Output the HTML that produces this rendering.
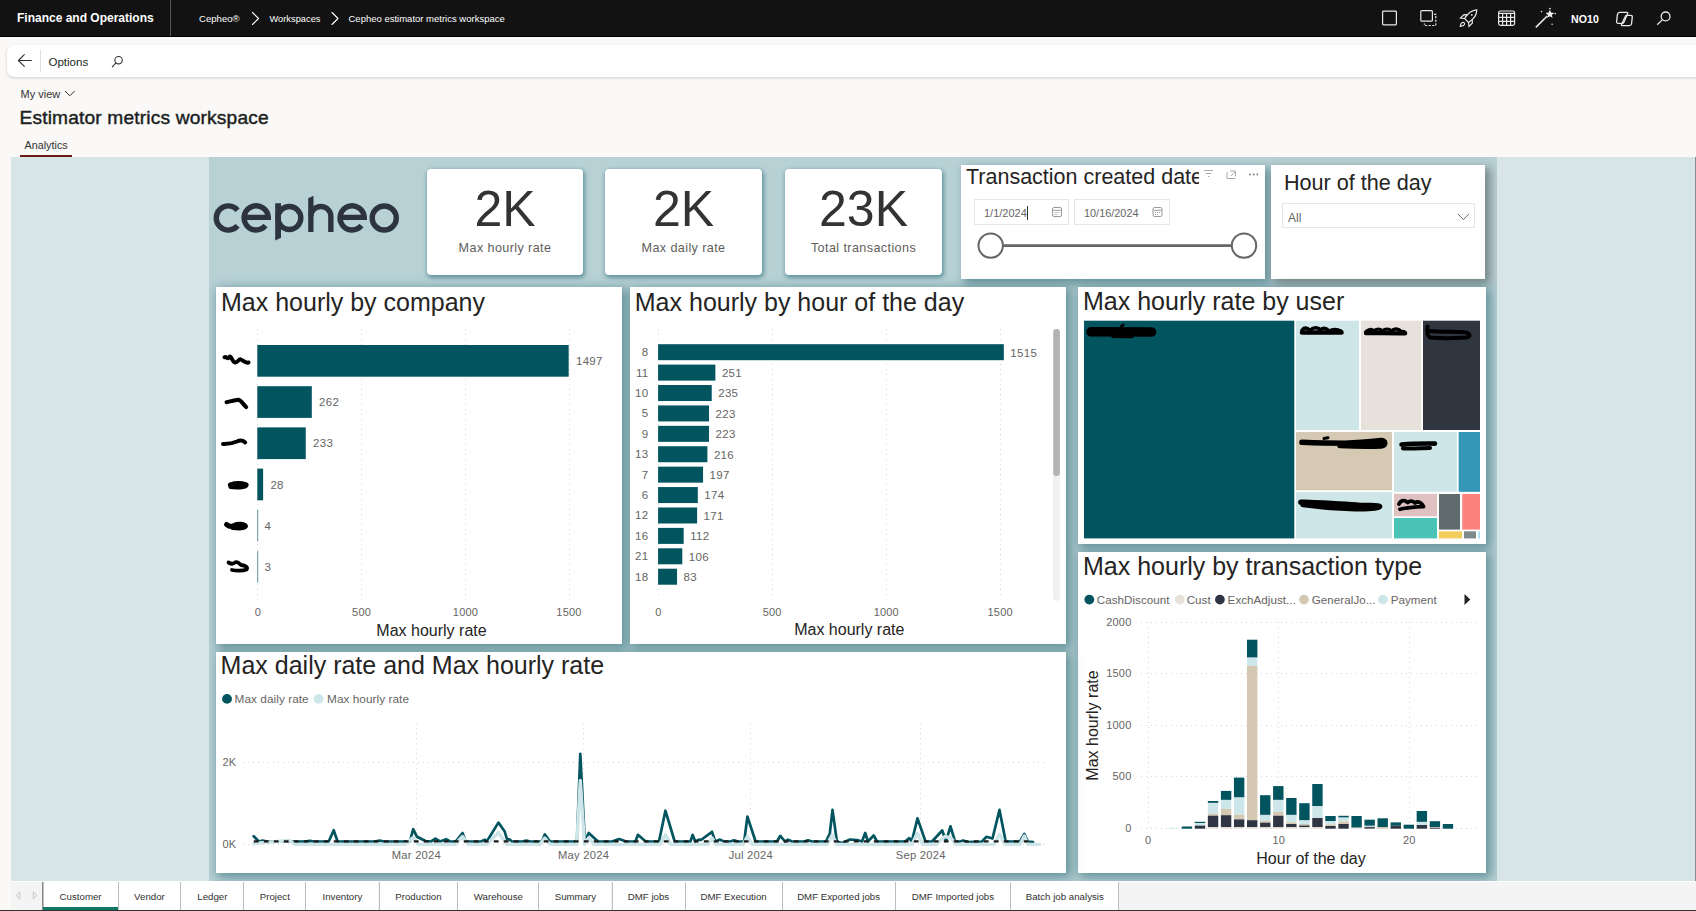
<!DOCTYPE html>
<html><head><meta charset="utf-8">
<style>
*{box-sizing:border-box;margin:0;padding:0}
html,body{width:1696px;height:911px;overflow:hidden;background:#faf9f8;font-family:"Liberation Sans",sans-serif;position:relative}
.a{position:absolute}
.t{position:absolute;white-space:nowrap;line-height:1}
#top{left:0;top:0;width:1696px;height:37px;background:#121212;border-bottom:1px solid #000}
#opt{left:7px;top:45px;width:1700px;height:32px;background:#fff;border-radius:7px;box-shadow:0 1px 3px rgba(0,0,0,.18)}
#canvas{left:11px;top:157px;width:1684px;height:724px;background:#d8e5e7}
#rborder{left:1695px;top:157px;width:1px;height:724px;background:#8a8a8a}
#page{left:209px;top:157px;width:1288px;height:724px;background:#b8d1d5}
.card{position:absolute;background:#fff;box-shadow:3px 3px 10px 2px rgba(45,105,115,.6)}
.kpi{border-radius:4px;box-shadow:1px 2px 4px 1px rgba(40,110,120,.6)}
.slc{box-shadow:4px 4px 9px 1px rgba(45,105,115,.6)}
.slc2{box-shadow:4px 4px 9px 1px rgba(70,78,82,.6)!important}
#tabs{left:11px;top:881px;width:1685px;height:29px;background:#f4f4f4;border-top:1px solid #fff}
#btm{left:0;top:910px;width:1696px;height:1px;background:#323130}
.tab{position:absolute;top:882px;height:28px;background:#fff;border-left:1px solid #bdbdbd;font-size:9.7px;color:#323130;text-align:center;line-height:29.5px;white-space:nowrap}
</style></head><body>
<!-- top bar -->
<div id="top" class="a"></div>
<div class="t" style="left:17px;top:12px;font-size:12px;font-weight:bold;color:#fff">Finance and Operations</div>
<div class="a" style="left:170px;top:0;width:1px;height:36px;background:#555"></div>
<div class="t" style="left:199px;top:14px;font-size:9.6px;color:#fff">Cepheo®</div>
<div class="t" style="left:269.5px;top:14.7px;font-size:9.3px;color:#fff">Workspaces</div>
<div class="t" style="left:348.5px;top:14px;font-size:9.5px;color:#fff">Cepheo estimator metrics workspace</div>
<svg class="a" style="left:0;top:0" width="1696" height="37" viewBox="0 0 1696 37">
 <g fill="none" stroke="#fff" stroke-width="1.1" stroke-linecap="round" stroke-linejoin="round">
  <path d="M252.5 12.5 L258.5 18.5 L252.5 24.5"/>
  <path d="M332 12.5 L338 18.5 L332 24.5"/>
 </g>
 <g fill="none" stroke="#e8e8e8" stroke-width="1.2">
  <rect x="1382.6" y="11.2" width="13.8" height="13.6" rx="0.8"/>
  <rect x="1420.8" y="10.6" width="11.6" height="10.6" rx="1"/>
  <path d="M1434 14.3 h1.8 v11.2 h-11.4 v-2" stroke-dasharray="2.2 1.4"/>
  <path d="M1476.8 9.8 C1471 10.2 1467.5 13.5 1464.5 18.5 L1468.5 22.5 C1473.5 19.5 1476.8 16 1476.8 9.8 Z"/>
  <path d="M1464.5 18.5 L1460.5 18 L1464 14.6 L1467.3 14.8"/>
  <path d="M1468.5 22.5 L1469 26.5 L1472.4 23 L1472.2 19.8"/>
  <path d="M1460.3 26.4 C1460.4 24.6 1461.1 22.9 1462.5 22.5 C1463.9 22.1 1465 23.4 1464.5 24.6 C1463.9 25.8 1462.2 26.2 1460.3 26.4 Z"/>
  <circle cx="1471.8" cy="14.9" r="0.9" fill="#e8e8e8" stroke="none"/>
  <rect x="1498.6" y="11" width="16" height="14.4" rx="1.8"/>
  <path d="M1498.6 13.3 h16 M1498.6 17.3 h16 M1498.6 21.3 h16 M1502.6 13.3 v12 M1506.6 13.3 v12 M1510.6 13.3 v12"/>
  <path d="M1535.8 27.4 L1547.2 16" stroke-width="1.6"/>
  <circle cx="1665.6" cy="16.4" r="4.4" stroke-width="1.3"/>
  <path d="M1662.5 19.6 L1657.2 24.8" stroke-width="1.3"/>
  <path d="M1619.5 12.3 H1626.8 Q1628.2 12.3 1627.7 13.6 L1623.8 22.4 Q1623.3 23.3 1622.3 23.3 H1618.2 Q1616.4 23.3 1616.6 21.6 L1617.4 14.6 Q1617.8 12.3 1619.5 12.3 Z" stroke-width="1.3"/>
  <path d="M1624.2 25.6 H1629.4 Q1631.2 25.6 1631.5 24 L1632.3 17.2 Q1632.4 15.3 1630.8 15.3 H1626.8 Q1625.8 15.3 1625.4 16.2 L1621.5 24.4 Q1621 25.6 1622.5 25.6 Z" stroke-width="1.3"/>
 </g>
 <path fill="#f0f0f0" d="M1549.9 9.8 L1551.1 12.6 L1554.2 12.9 L1551.8 14.9 L1552.6 18 L1549.9 16.3 L1547.2 18 L1548 14.9 L1545.6 12.9 L1548.7 12.6 Z"/>
 <g fill="#ddd"><circle cx="1541.5" cy="11.6" r="0.8"/><circle cx="1549.9" cy="8.6" r="0.9"/><circle cx="1555.2" cy="13.6" r="0.8"/><circle cx="1552.1" cy="24.2" r="0.8"/></g>
</svg>
<div class="t" style="left:1571px;top:14px;font-size:10.6px;font-weight:bold;color:#fff;letter-spacing:0.1px">NO10</div>

<!-- options bar -->
<div id="opt" class="a"></div>
<div class="a" style="left:39.5px;top:50px;width:1px;height:22px;background:#e1dfdd"></div>
<svg class="a" style="left:0;top:40px" width="140" height="40" viewBox="0 40 140 40">
 <g fill="none" stroke="#323130" stroke-width="1.1" stroke-linecap="round" stroke-linejoin="round">
  <path d="M31.3 60.5 H18.4 M24.3 54.7 L18.4 60.5 L24.3 66.3"/>
  <circle cx="118.6" cy="60.2" r="3.7"/>
  <path d="M116 62.9 L112.3 66.8"/>
 </g>
</svg>
<svg class="a" style="left:60px;top:86px" width="20" height="14" viewBox="60 86 20 14"><path d="M65 91 L69.8 95.8 L74.6 91" fill="none" stroke="#323130" stroke-width="1"/></svg>
<div class="t" style="left:48.5px;top:57.3px;font-size:11.5px;color:#201f1e">Options</div>

<!-- header -->
<div class="t" style="left:20.5px;top:89px;font-size:11px;color:#323130">My view</div>
<div class="t" style="left:19.5px;top:107.5px;font-size:19.2px;letter-spacing:0.15px;color:#201f1e;-webkit-text-stroke:0.45px #201f1e">Estimator metrics workspace</div>
<div class="t" style="left:24.5px;top:140px;font-size:10.8px;color:#323130">Analytics</div>
<div class="a" style="left:20px;top:155px;width:52px;height:2px;background:#6b1a1a"></div>

<!-- canvas -->
<div id="canvas" class="a"></div>
<div id="rborder" class="a"></div>
<div id="page" class="a"></div>
<div class="a" style="left:209px;top:157px;width:1288px;height:724px;overflow:hidden"><div class="a" style="left:-209px;top:-157px;width:1696px;height:911px">

<!-- KPI cards -->
<div class="card kpi" style="left:427px;top:169px;width:156px;height:106px"></div>
<div class="card kpi" style="left:605px;top:169px;width:157px;height:106px"></div>
<div class="card kpi" style="left:785px;top:169px;width:157px;height:106px"></div>
<svg class="a" style="left:205px;top:185px" width="200" height="65" viewBox="205 185 200 65">
 <g fill="none" stroke="#2d3440" stroke-width="5.4">
  <path d="M237.6 210.2 A12.1 12.1 0 1 0 237.6 225.8"/>
  <path d="M244.3 217.4 H268.3 A12.1 12.1 0 1 0 265.5 225.6"/>
  <circle cx="289.35" cy="218" r="11.45"/>
  <path d="M310.85 216.5 A10 10 0 0 1 330.85 216.5 V231.9"/>
  <path d="M340.25 217.4 H364.25 A12.1 12.1 0 1 0 361.45 225.6"/>
  <circle cx="384.25" cy="218" r="12.05"/>
 </g>
 <g fill="#2d3440">
  <path d="M275.2 203.3 H281 V237.8 L275.2 240.4 Z"/>
  <path d="M308.2 198.3 L313.5 195.8 V231.9 H308.2 Z"/>
 </g>
</svg>
<div class="t" style="left:427px;top:184px;width:156px;text-align:center;font-size:50px;color:#333">2K</div>
<div class="t" style="left:427px;top:242px;width:156px;text-align:center;font-size:12.6px;letter-spacing:0.4px;color:#605e5c">Max hourly rate</div>
<div class="t" style="left:605px;top:184px;width:157px;text-align:center;font-size:50px;color:#333">2K</div>
<div class="t" style="left:605px;top:242px;width:157px;text-align:center;font-size:12.6px;letter-spacing:0.4px;color:#605e5c">Max daily rate</div>
<div class="t" style="left:785px;top:184px;width:157px;text-align:center;font-size:50px;color:#333">23K</div>
<div class="t" style="left:785px;top:242px;width:157px;text-align:center;font-size:12.6px;letter-spacing:0.4px;color:#605e5c">Total transactions</div>
<!-- slicers -->
<div class="card slc" style="left:961px;top:165px;width:304px;height:114px"></div>
<div class="card slc slc2" style="left:1271px;top:165px;width:214px;height:114px"></div>
<div class="a" style="left:961px;top:165px;width:238px;height:30px;overflow:hidden"><div class="t" style="left:5px;top:1.5px;font-size:21.5px;color:#252423">Transaction created date</div></div>
<div class="a" style="left:973.5px;top:199px;width:95px;height:26px;border:1px solid #e6e6e6"></div>
<div class="a" style="left:1074px;top:199px;width:95.5px;height:26px;border:1px solid #e6e6e6"></div>
<div class="t" style="left:984px;top:208px;font-size:11px;color:#666">1/1/2024</div>
<div class="a" style="left:1026.5px;top:206px;width:1.2px;height:14px;background:#333"></div>
<div class="t" style="left:1084px;top:208px;font-size:10.9px;color:#666">10/16/2024</div>
<svg class="a" style="left:961px;top:165px" width="304" height="114" viewBox="961 165 304 114">
 <g fill="none" stroke="#9a9a9a" stroke-width="1">
  <rect x="1052.5" y="207.5" width="9" height="9" rx="1.5"/><path d="M1052.5 210.3 h9"/>
  <rect x="1153" y="207.5" width="9" height="9" rx="1.5"/><path d="M1153 210.3 h9"/>
 </g>
 <g fill="#9a9a9a"><rect x="1054.5" y="212" width="1" height="1"/><rect x="1056.5" y="212" width="1" height="1"/><rect x="1058.5" y="212" width="1" height="1"/><rect x="1054.5" y="214" width="1" height="1"/><rect x="1056.5" y="214" width="1" height="1"/>
 <rect x="1155" y="212" width="1" height="1"/><rect x="1157" y="212" width="1" height="1"/><rect x="1159" y="212" width="1" height="1"/><rect x="1155" y="214" width="1" height="1"/><rect x="1157" y="214" width="1" height="1"/></g>
 <g fill="none" stroke="#aaa" stroke-width="1">
  <path d="M1204 170.5 h9 M1206 173.5 h5 M1207.8 176.5 h1.6"/>
  <path d="M1227 172 v6.5 h8.5 M1230 171 h5.5 v5.5 M1231 176 l4.5 -4.5"/>
 </g>
 <g fill="#777"><circle cx="1250" cy="174.5" r="0.9"/><circle cx="1253.7" cy="174.5" r="0.9"/><circle cx="1257.4" cy="174.5" r="0.9"/></g>
 <path d="M1003 245.6 H1231.5" stroke="#666" stroke-width="2.6"/>
 <g fill="#fff" stroke="#666" stroke-width="2"><circle cx="990.7" cy="245.6" r="12.2"/><circle cx="1244" cy="245.6" r="12.2"/></g>
</svg>
<div class="t" style="left:1284px;top:172px;font-size:21.6px;color:#252423">Hour of the day</div>
<div class="a" style="left:1281.5px;top:203px;width:193px;height:24.5px;border:1px solid #e6e6e6"></div>
<div class="t" style="left:1288px;top:211.5px;font-size:12px;color:#666">All</div>
<svg class="a" style="left:1450px;top:205px" width="25" height="20" viewBox="1450 205 25 20"><path d="M1457.8 213.8 L1463.4 219.6 L1469 213.8" fill="none" stroke="#666" stroke-width="1"/></svg>
<!-- charts -->
<div class="card" style="left:216px;top:287px;width:406px;height:357px"></div>
<div class="card" style="left:630px;top:287px;width:436px;height:357px"></div>
<div class="card" style="left:1078px;top:287px;width:408px;height:257px"></div>
<div class="card" style="left:1078px;top:552px;width:408px;height:321px"></div>
<div class="card" style="left:216px;top:652px;width:850px;height:221px"></div>

<!--C0-->
<svg class="a" style="left:0;top:0" width="1696" height="911" viewBox="0 0 1696 911" font-family="Liberation Sans",sans-serif>
<text x="221" y="310.5" font-size="25" fill="#252423" text-anchor="start" >Max hourly by company</text>
<line x1="257.5" y1="329" x2="257.5" y2="601" stroke="#d6d6d6" stroke-width="1" stroke-dasharray="1 4" />
<line x1="361.5" y1="329" x2="361.5" y2="601" stroke="#d6d6d6" stroke-width="1" stroke-dasharray="1 4" />
<line x1="465.5" y1="329" x2="465.5" y2="601" stroke="#d6d6d6" stroke-width="1" stroke-dasharray="1 4" />
<line x1="569.5" y1="329" x2="569.5" y2="601" stroke="#d6d6d6" stroke-width="1" stroke-dasharray="1 4" />
<rect x="257.30" y="345.00" width="311.38" height="31.70" fill="#02545f"/>
<text x="575.9759999999999" y="365.0" font-size="11.5" fill="#666463" text-anchor="start" letter-spacing="0.3">1497</text>
<rect x="257.30" y="386.20" width="54.50" height="31.70" fill="#02545f"/>
<text x="319.096" y="406.2" font-size="11.5" fill="#666463" text-anchor="start" letter-spacing="0.3">262</text>
<rect x="257.30" y="427.40" width="48.46" height="31.70" fill="#02545f"/>
<text x="313.064" y="447.4" font-size="11.5" fill="#666463" text-anchor="start" letter-spacing="0.3">233</text>
<rect x="257.30" y="468.60" width="5.82" height="31.70" fill="#02545f"/>
<text x="270.42400000000004" y="488.6" font-size="11.5" fill="#666463" text-anchor="start" letter-spacing="0.3">28</text>
<rect x="257.30" y="509.80" width="0.90" height="31.70" fill="#4f8a92"/>
<text x="264.5" y="529.8" font-size="11.5" fill="#666463" text-anchor="start" letter-spacing="0.3">4</text>
<rect x="257.30" y="551.00" width="0.90" height="31.70" fill="#4f8a92"/>
<text x="264.5" y="571.0" font-size="11.5" fill="#666463" text-anchor="start" letter-spacing="0.3">3</text>
<text x="257.9" y="615.5" font-size="11" fill="#666463" text-anchor="middle" letter-spacing="0.2">0</text>
<text x="361.6" y="615.5" font-size="11" fill="#666463" text-anchor="middle" letter-spacing="0.2">500</text>
<text x="465.5" y="615.5" font-size="11" fill="#666463" text-anchor="middle" letter-spacing="0.2">1000</text>
<text x="569" y="615.5" font-size="11" fill="#666463" text-anchor="middle" letter-spacing="0.2">1500</text>
<text x="431.5" y="635.5" font-size="16" fill="#252423" text-anchor="middle" >Max hourly rate</text>
<path d="M224.5 357.2 C226.5 356 227.5 360 229.5 357 C231 355 232 361.5 235 362.5 C238 363 238.5 358.5 241 359.5 C243.5 360.5 245 363.5 248.5 362.5" fill="none" stroke="#000" stroke-width="4" stroke-linecap="round" stroke-linejoin="round"/>
<path d="M226.5 402.2 C230 401.5 235 400 238.5 399.8 C241 400.2 243 404 246.2 407.2" fill="none" stroke="#000" stroke-width="4" stroke-linecap="round" stroke-linejoin="round"/>
<path d="M223 444 C228 444.2 233 443.2 237 441.5 C240 440 243 440.5 245.2 442.5" fill="none" stroke="#000" stroke-width="4" stroke-linecap="round" stroke-linejoin="round"/>
<path d="M230.5 485 C235 483.6 242 483.6 246 485 C245 487 236 487.3 231 486.5" fill="none" stroke="#000" stroke-width="5.2" stroke-linecap="round" stroke-linejoin="round"/>
<path d="M226.5 524.5 C229 526.5 232 526.8 234 525.5 C238 523.6 244 524 245.5 526.2 C244 528 237 528 233 527.5" fill="none" stroke="#000" stroke-width="5" stroke-linecap="round" stroke-linejoin="round"/>
<path d="M228.5 562.5 C231 564 233 564.5 235 562.5 C237 561 239 563 241 565 C246 565.5 248 567.5 246.5 569.5 C243 571 236 571 232 570" fill="none" stroke="#000" stroke-width="3.8" stroke-linecap="round" stroke-linejoin="round"/>
<text x="634.8" y="310.5" font-size="25" fill="#252423" text-anchor="start" >Max hourly by hour of the day</text>
<line x1="658.5" y1="329" x2="658.5" y2="599" stroke="#d6d6d6" stroke-width="1" stroke-dasharray="1 4" />
<line x1="772.5" y1="329" x2="772.5" y2="599" stroke="#d6d6d6" stroke-width="1" stroke-dasharray="1 4" />
<line x1="886.5" y1="329" x2="886.5" y2="599" stroke="#d6d6d6" stroke-width="1" stroke-dasharray="1 4" />
<line x1="1000.5" y1="329" x2="1000.5" y2="599" stroke="#d6d6d6" stroke-width="1" stroke-dasharray="1 4" />
<rect x="658.10" y="344.20" width="345.72" height="16.00" fill="#02545f"/>
<text x="648.5" y="356.2" font-size="11.5" fill="#666463" text-anchor="end" letter-spacing="0.3">8</text>
<text x="1010.323" y="356.5" font-size="11.5" fill="#666463" text-anchor="start" letter-spacing="0.3">1515</text>
<rect x="658.10" y="364.61" width="57.28" height="16.00" fill="#02545f"/>
<text x="648.5" y="376.61" font-size="11.5" fill="#666463" text-anchor="end" letter-spacing="0.3">11</text>
<text x="721.8782" y="376.91" font-size="11.5" fill="#666463" text-anchor="start" letter-spacing="0.3">251</text>
<rect x="658.10" y="385.02" width="53.63" height="16.00" fill="#02545f"/>
<text x="648.5" y="397.02" font-size="11.5" fill="#666463" text-anchor="end" letter-spacing="0.3">10</text>
<text x="718.227" y="397.32" font-size="11.5" fill="#666463" text-anchor="start" letter-spacing="0.3">235</text>
<rect x="658.10" y="405.43" width="50.89" height="16.00" fill="#02545f"/>
<text x="648.5" y="417.43" font-size="11.5" fill="#666463" text-anchor="end" letter-spacing="0.3">5</text>
<text x="715.4886" y="417.73" font-size="11.5" fill="#666463" text-anchor="start" letter-spacing="0.3">223</text>
<rect x="658.10" y="425.84" width="50.89" height="16.00" fill="#02545f"/>
<text x="648.5" y="437.84" font-size="11.5" fill="#666463" text-anchor="end" letter-spacing="0.3">9</text>
<text x="715.4886" y="438.14" font-size="11.5" fill="#666463" text-anchor="start" letter-spacing="0.3">223</text>
<rect x="658.10" y="446.25" width="49.29" height="16.00" fill="#02545f"/>
<text x="648.5" y="458.25" font-size="11.5" fill="#666463" text-anchor="end" letter-spacing="0.3">13</text>
<text x="713.8912" y="458.55" font-size="11.5" fill="#666463" text-anchor="start" letter-spacing="0.3">216</text>
<rect x="658.10" y="466.66" width="44.96" height="16.00" fill="#02545f"/>
<text x="648.5" y="478.65999999999997" font-size="11.5" fill="#666463" text-anchor="end" letter-spacing="0.3">7</text>
<text x="709.5554" y="478.96" font-size="11.5" fill="#666463" text-anchor="start" letter-spacing="0.3">197</text>
<rect x="658.10" y="487.07" width="39.71" height="16.00" fill="#02545f"/>
<text x="648.5" y="499.07" font-size="11.5" fill="#666463" text-anchor="end" letter-spacing="0.3">6</text>
<text x="704.3068000000001" y="499.37" font-size="11.5" fill="#666463" text-anchor="start" letter-spacing="0.3">174</text>
<rect x="658.10" y="507.48" width="39.02" height="16.00" fill="#02545f"/>
<text x="648.5" y="519.48" font-size="11.5" fill="#666463" text-anchor="end" letter-spacing="0.3">12</text>
<text x="703.6222" y="519.78" font-size="11.5" fill="#666463" text-anchor="start" letter-spacing="0.3">171</text>
<rect x="658.10" y="527.89" width="25.56" height="16.00" fill="#02545f"/>
<text x="648.5" y="539.89" font-size="11.5" fill="#666463" text-anchor="end" letter-spacing="0.3">16</text>
<text x="690.1584" y="540.1899999999999" font-size="11.5" fill="#666463" text-anchor="start" letter-spacing="0.3">112</text>
<rect x="658.10" y="548.30" width="24.19" height="16.00" fill="#02545f"/>
<text x="648.5" y="560.3" font-size="11.5" fill="#666463" text-anchor="end" letter-spacing="0.3">21</text>
<text x="688.7892" y="560.5999999999999" font-size="11.5" fill="#666463" text-anchor="start" letter-spacing="0.3">106</text>
<rect x="658.10" y="568.71" width="18.94" height="16.00" fill="#02545f"/>
<text x="648.5" y="580.71" font-size="11.5" fill="#666463" text-anchor="end" letter-spacing="0.3">18</text>
<text x="683.5406" y="581.01" font-size="11.5" fill="#666463" text-anchor="start" letter-spacing="0.3">83</text>
<text x="658.3" y="615.5" font-size="11" fill="#666463" text-anchor="middle" letter-spacing="0.2">0</text>
<text x="772.2" y="615.5" font-size="11" fill="#666463" text-anchor="middle" letter-spacing="0.2">500</text>
<text x="886.3" y="615.5" font-size="11" fill="#666463" text-anchor="middle" letter-spacing="0.2">1000</text>
<text x="1000.2" y="615.5" font-size="11" fill="#666463" text-anchor="middle" letter-spacing="0.2">1500</text>
<text x="849.3" y="635" font-size="16" fill="#252423" text-anchor="middle" >Max hourly rate</text>
<rect x="1053" y="329" width="7" height="272" rx="3.5" fill="#f0f0f0"/>
<rect x="1053.3" y="329" width="6.6" height="147" rx="3.3" fill="#b3b3b3"/>
<text x="1083" y="309.8" font-size="25" fill="#252423" text-anchor="start" >Max hourly rate by user</text>
<rect x="1084.00" y="320.70" width="210.30" height="217.70" fill="#02545f"/>
<rect x="1296.00" y="320.70" width="63.00" height="109.30" fill="#cfe6e9"/>
<rect x="1361.00" y="320.70" width="60.20" height="109.30" fill="#e6e1da"/>
<rect x="1423.00" y="320.70" width="57.00" height="109.30" fill="#30363f"/>
<rect x="1296.00" y="432.00" width="96.00" height="58.20" fill="#d5c9b4"/>
<rect x="1394.00" y="432.00" width="63.00" height="59.80" fill="#cfe6e9"/>
<rect x="1458.60" y="432.00" width="21.40" height="59.80" fill="#3597b8"/>
<rect x="1296.00" y="492.00" width="96.00" height="46.40" fill="#cfe6e9"/>
<rect x="1394.00" y="493.80" width="43.00" height="22.50" fill="#dfc1c2"/>
<rect x="1394.00" y="518.00" width="43.00" height="20.40" fill="#49c4b7"/>
<rect x="1439.00" y="494.00" width="21.00" height="35.60" fill="#5f6b6d"/>
<rect x="1462.20" y="494.00" width="17.80" height="35.60" fill="#fd817e"/>
<rect x="1439.00" y="531.30" width="23.00" height="7.10" fill="#f2cd5b"/>
<rect x="1464.00" y="531.30" width="12.00" height="7.10" fill="#808a8c"/>
<rect x="1478.30" y="531.30" width="1.70" height="7.10" fill="#a6d9ef"/>
<path d="M1091 331.8 L1151.5 332" fill="none" stroke="#000" stroke-width="9.6" stroke-linecap="round" stroke-linejoin="round"/>
<path d="M1113 336 L1132 336.3" fill="none" stroke="#000" stroke-width="4" stroke-linecap="round" stroke-linejoin="round"/>
<path d="M1121 327 L1123 325" fill="none" stroke="#000" stroke-width="3" stroke-linecap="round" stroke-linejoin="round"/>
<path d="M1302 332.5 C1315 332.6 1330 332.3 1341.5 332.5" fill="none" stroke="#000" stroke-width="4.6" stroke-linecap="round" stroke-linejoin="round"/>
<path d="M1302 330.5 C1304 327 1307 327.5 1310 330.5 C1313 327 1318 327 1320.5 330 C1323 327.5 1326 327.5 1329 331 C1333 329 1337 329 1341 331" fill="none" stroke="#000" stroke-width="3.6" stroke-linecap="round" stroke-linejoin="round"/>
<path d="M1366 333 C1380 333.2 1392 333 1405 333.4" fill="none" stroke="#000" stroke-width="4.4" stroke-linecap="round" stroke-linejoin="round"/>
<path d="M1366 331.5 C1369 329 1372 329 1374 331 C1376 328.5 1380 328.5 1382.5 331 C1385 328.5 1389 328.5 1391.5 331 C1394 328 1399 328.5 1401 331.5 C1403 331 1405 332 1405.5 333" fill="none" stroke="#000" stroke-width="3.4" stroke-linecap="round" stroke-linejoin="round"/>
<path d="M1427.5 326.5 C1427 331 1427.5 336 1430 337.5 C1440 338.5 1455 338.3 1466 337.5 C1472 336.5 1470 332.5 1462 332 C1450 331.5 1438 332 1431 331" fill="none" stroke="#000" stroke-width="4" stroke-linecap="round" stroke-linejoin="round"/>
<path d="M1302 442.3 C1315 442.8 1330 443.2 1345 443.2 C1360 442.8 1372 441.5 1381 440.5 C1386 440.5 1386 445 1381 446 C1365 446.5 1350 446 1340 445.5" fill="none" stroke="#000" stroke-width="5.6" stroke-linecap="round" stroke-linejoin="round"/>
<path d="M1324 438.5 L1328 437.8" fill="none" stroke="#000" stroke-width="3" stroke-linecap="round" stroke-linejoin="round"/>
<path d="M1401.5 444.5 C1410 443.8 1425 443.5 1435 443.6" fill="none" stroke="#000" stroke-width="4.6" stroke-linecap="round" stroke-linejoin="round"/>
<path d="M1403 448.3 C1412 448.6 1422 448.5 1430 448" fill="none" stroke="#000" stroke-width="4.2" stroke-linecap="round" stroke-linejoin="round"/>
<path d="M1301 502.2 C1320 503 1345 504 1360 505.5 C1370 506 1378 505 1379.5 506.5 C1378 508.5 1365 509 1350 508.5 C1335 508 1315 506 1303 504.5" fill="none" stroke="#000" stroke-width="5.6" stroke-linecap="round" stroke-linejoin="round"/>
<path d="M1399 504 C1401 499.5 1405 500 1407.5 502.5 C1410 500.5 1413 500.5 1415 503 C1418 501 1421 502 1423.5 506.5 C1415 507 1405 507.5 1400 509.2" fill="none" stroke="#000" stroke-width="3.8" stroke-linecap="round" stroke-linejoin="round"/>
<text x="1083" y="575.3" font-size="25" fill="#252423" text-anchor="start" >Max hourly by transaction type</text>
<circle cx="1089.3" cy="599.6" r="4.9" fill="#02545f"/>
<text x="1096.8" y="603.8" font-size="11.6" fill="#666463" text-anchor="start" letter-spacing="0.05">CashDiscount</text>
<circle cx="1179.8" cy="599.6" r="4.9" fill="#e6e0d9"/>
<text x="1186.7" y="603.8" font-size="11.6" fill="#666463" text-anchor="start" letter-spacing="0.05">Cust</text>
<circle cx="1219.9" cy="599.6" r="4.9" fill="#2f3542"/>
<text x="1227.6" y="603.8" font-size="11.6" fill="#666463" text-anchor="start" letter-spacing="0.05">ExchAdjust...</text>
<circle cx="1304" cy="599.6" r="4.9" fill="#d4c8b3"/>
<text x="1311.8" y="603.8" font-size="11.6" fill="#666463" text-anchor="start" letter-spacing="0.05">GeneralJo...</text>
<circle cx="1383" cy="599.6" r="4.9" fill="#cfe6e9"/>
<text x="1390.7" y="603.8" font-size="11.6" fill="#666463" text-anchor="start" letter-spacing="0.05">Payment</text>
<path d="M1464.5 594 L1470.3 599.5 L1464.5 605 Z" fill="#252423"/>
<line x1="1141" y1="622.5" x2="1480" y2="622.5" stroke="#d6d6d6" stroke-width="1" stroke-dasharray="1 4" />
<line x1="1141" y1="673.5" x2="1480" y2="673.5" stroke="#d6d6d6" stroke-width="1" stroke-dasharray="1 4" />
<line x1="1141" y1="725.5" x2="1480" y2="725.5" stroke="#d6d6d6" stroke-width="1" stroke-dasharray="1 4" />
<line x1="1141" y1="776.5" x2="1480" y2="776.5" stroke="#d6d6d6" stroke-width="1" stroke-dasharray="1 4" />
<line x1="1141" y1="828.5" x2="1480" y2="828.5" stroke="#d6d6d6" stroke-width="1" stroke-dasharray="1 4" />
<line x1="1148.5" y1="622" x2="1148.5" y2="829" stroke="#d6d6d6" stroke-width="1" stroke-dasharray="1 4" />
<line x1="1278.5" y1="622" x2="1278.5" y2="829" stroke="#d6d6d6" stroke-width="1" stroke-dasharray="1 4" />
<line x1="1409.5" y1="622" x2="1409.5" y2="829" stroke="#d6d6d6" stroke-width="1" stroke-dasharray="1 4" />
<text x="1131.5" y="625.7" font-size="11" fill="#666463" text-anchor="end" letter-spacing="0.2">2000</text>
<text x="1131.5" y="677.2" font-size="11" fill="#666463" text-anchor="end" letter-spacing="0.2">1500</text>
<text x="1131.5" y="728.8000000000001" font-size="11" fill="#666463" text-anchor="end" letter-spacing="0.2">1000</text>
<text x="1131.5" y="780.4" font-size="11" fill="#666463" text-anchor="end" letter-spacing="0.2">500</text>
<text x="1131.5" y="832.2" font-size="11" fill="#666463" text-anchor="end" letter-spacing="0.2">0</text>
<text x="1148.2" y="844.2" font-size="11" fill="#666463" text-anchor="middle" letter-spacing="0.2">0</text>
<text x="1278.7" y="844.2" font-size="11" fill="#666463" text-anchor="middle" letter-spacing="0.2">10</text>
<text x="1409.2" y="844.2" font-size="11" fill="#666463" text-anchor="middle" letter-spacing="0.2">20</text>
<text x="1311" y="863.5" font-size="16" fill="#252423" text-anchor="middle" >Hour of the day</text>
<text x="0" y="0" font-size="16" fill="#252423" text-anchor="middle" transform="translate(1097.6 725.5) rotate(-90)">Max hourly rate</text>
<rect x="1168.70" y="827.80" width="10.40" height="0.90" fill="#cde6e9"/>
<rect x="1181.75" y="826.50" width="10.40" height="2.20" fill="#02545f"/>
<rect x="1194.80" y="821.80" width="10.40" height="1.40" fill="#02545f"/>
<rect x="1194.80" y="823.20" width="10.40" height="2.40" fill="#cde6e9"/>
<rect x="1194.80" y="825.60" width="10.40" height="3.10" fill="#2f3542"/>
<rect x="1207.85" y="801.00" width="10.40" height="1.90" fill="#02545f"/>
<rect x="1207.85" y="802.90" width="10.40" height="10.90" fill="#cde6e9"/>
<rect x="1207.85" y="813.80" width="10.40" height="1.90" fill="#d4c8b3"/>
<rect x="1207.85" y="815.70" width="10.40" height="11.50" fill="#2f3542"/>
<rect x="1207.85" y="827.20" width="10.40" height="1.50" fill="#e6e0d9"/>
<rect x="1220.90" y="790.90" width="10.40" height="9.00" fill="#02545f"/>
<rect x="1220.90" y="799.90" width="10.40" height="9.00" fill="#cde6e9"/>
<rect x="1220.90" y="808.90" width="10.40" height="6.30" fill="#d4c8b3"/>
<rect x="1220.90" y="815.20" width="10.40" height="12.00" fill="#2f3542"/>
<rect x="1220.90" y="827.20" width="10.40" height="1.50" fill="#e6e0d9"/>
<rect x="1233.95" y="777.60" width="10.40" height="19.90" fill="#02545f"/>
<rect x="1233.95" y="797.50" width="10.40" height="17.20" fill="#cde6e9"/>
<rect x="1233.95" y="814.70" width="10.40" height="4.70" fill="#d4c8b3"/>
<rect x="1233.95" y="819.40" width="10.40" height="7.80" fill="#2f3542"/>
<rect x="1233.95" y="827.20" width="10.40" height="1.50" fill="#e6e0d9"/>
<rect x="1247.00" y="639.70" width="10.40" height="17.90" fill="#02545f"/>
<rect x="1247.00" y="657.60" width="10.40" height="8.10" fill="#cde6e9"/>
<rect x="1247.00" y="665.70" width="10.40" height="154.50" fill="#d4c8b3"/>
<rect x="1247.00" y="820.20" width="10.40" height="7.00" fill="#2f3542"/>
<rect x="1247.00" y="827.20" width="10.40" height="1.50" fill="#e6e0d9"/>
<rect x="1260.05" y="795.20" width="10.40" height="19.70" fill="#02545f"/>
<rect x="1260.05" y="814.90" width="10.40" height="5.90" fill="#cde6e9"/>
<rect x="1260.05" y="820.80" width="10.40" height="1.90" fill="#d4c8b3"/>
<rect x="1260.05" y="822.70" width="10.40" height="4.50" fill="#2f3542"/>
<rect x="1260.05" y="827.20" width="10.40" height="1.50" fill="#e6e0d9"/>
<rect x="1273.10" y="786.10" width="10.40" height="13.80" fill="#02545f"/>
<rect x="1273.10" y="799.90" width="10.40" height="12.00" fill="#cde6e9"/>
<rect x="1273.10" y="811.90" width="10.40" height="3.80" fill="#d4c8b3"/>
<rect x="1273.10" y="815.70" width="10.40" height="11.50" fill="#2f3542"/>
<rect x="1273.10" y="827.20" width="10.40" height="1.50" fill="#e6e0d9"/>
<rect x="1286.15" y="798.00" width="10.40" height="16.90" fill="#02545f"/>
<rect x="1286.15" y="814.90" width="10.40" height="7.40" fill="#cde6e9"/>
<rect x="1286.15" y="822.30" width="10.40" height="1.70" fill="#d4c8b3"/>
<rect x="1286.15" y="824.00" width="10.40" height="3.20" fill="#2f3542"/>
<rect x="1286.15" y="827.20" width="10.40" height="1.50" fill="#e6e0d9"/>
<rect x="1299.20" y="803.20" width="10.40" height="17.20" fill="#02545f"/>
<rect x="1299.20" y="820.40" width="10.40" height="3.60" fill="#cde6e9"/>
<rect x="1299.20" y="824.00" width="10.40" height="1.50" fill="#d4c8b3"/>
<rect x="1299.20" y="825.50" width="10.40" height="1.70" fill="#2f3542"/>
<rect x="1299.20" y="827.20" width="10.40" height="1.50" fill="#e6e0d9"/>
<rect x="1312.25" y="784.00" width="10.40" height="22.20" fill="#02545f"/>
<rect x="1312.25" y="806.20" width="10.40" height="11.80" fill="#cde6e9"/>
<rect x="1312.25" y="818.00" width="10.40" height="9.20" fill="#2f3542"/>
<rect x="1312.25" y="827.20" width="10.40" height="1.50" fill="#e6e0d9"/>
<rect x="1325.30" y="816.00" width="10.40" height="5.00" fill="#02545f"/>
<rect x="1325.30" y="821.00" width="10.40" height="3.50" fill="#cde6e9"/>
<rect x="1325.30" y="824.50" width="10.40" height="1.50" fill="#d4c8b3"/>
<rect x="1325.30" y="826.00" width="10.40" height="2.70" fill="#2f3542"/>
<rect x="1338.35" y="815.80" width="10.40" height="1.80" fill="#02545f"/>
<rect x="1338.35" y="817.60" width="10.40" height="3.90" fill="#cde6e9"/>
<rect x="1338.35" y="821.50" width="10.40" height="2.50" fill="#d4c8b3"/>
<rect x="1338.35" y="824.00" width="10.40" height="4.70" fill="#2f3542"/>
<rect x="1351.40" y="816.00" width="10.40" height="11.70" fill="#02545f"/>
<rect x="1351.40" y="827.70" width="10.40" height="1.00" fill="#e6e0d9"/>
<rect x="1364.45" y="819.70" width="10.40" height="6.10" fill="#02545f"/>
<rect x="1364.45" y="825.80" width="10.40" height="1.10" fill="#cde6e9"/>
<rect x="1364.45" y="826.90" width="10.40" height="1.80" fill="#4a5058"/>
<rect x="1377.50" y="818.30" width="10.40" height="8.70" fill="#02545f"/>
<rect x="1377.50" y="827.00" width="10.40" height="1.70" fill="#d4c8b3"/>
<rect x="1390.55" y="822.40" width="10.40" height="3.30" fill="#02545f"/>
<rect x="1390.55" y="825.70" width="10.40" height="3.00" fill="#2f3542"/>
<rect x="1403.60" y="824.70" width="10.40" height="4.00" fill="#02545f"/>
<rect x="1416.65" y="811.00" width="10.40" height="10.90" fill="#02545f"/>
<rect x="1416.65" y="821.90" width="10.40" height="3.10" fill="#cde6e9"/>
<rect x="1416.65" y="825.00" width="10.40" height="3.70" fill="#2f3542"/>
<rect x="1429.70" y="821.20" width="10.40" height="5.80" fill="#02545f"/>
<rect x="1429.70" y="827.00" width="10.40" height="0.80" fill="#d4c8b3"/>
<rect x="1429.70" y="827.80" width="10.40" height="0.90" fill="#2f3542"/>
<rect x="1442.75" y="824.00" width="10.40" height="4.70" fill="#02545f"/>
<text x="220.6" y="674.2" font-size="25" fill="#252423" text-anchor="start" >Max daily rate and Max hourly rate</text>
<circle cx="227" cy="698.9" r="4.9" fill="#02545f"/>
<text x="234.6" y="702.9" font-size="11.8" fill="#666463" text-anchor="start" letter-spacing="0.05">Max daily rate</text>
<circle cx="318.6" cy="698.9" r="4.9" fill="#cde6e9"/>
<text x="327" y="702.9" font-size="11.8" fill="#666463" text-anchor="start" letter-spacing="0.05">Max hourly rate</text>
<line x1="243" y1="762.5" x2="1045" y2="762.5" stroke="#d6d6d6" stroke-width="1" stroke-dasharray="1 4" />
<line x1="243" y1="844.5" x2="1045" y2="844.5" stroke="#d6d6d6" stroke-width="1" stroke-dasharray="1 4" />
<line x1="416.5" y1="723.3" x2="416.5" y2="844" stroke="#d6d6d6" stroke-width="1" stroke-dasharray="1 4" />
<text x="416.4" y="858.7" font-size="11.2" fill="#666463" text-anchor="middle" letter-spacing="0.25">Mar 2024</text>
<line x1="583.5" y1="723.3" x2="583.5" y2="844" stroke="#d6d6d6" stroke-width="1" stroke-dasharray="1 4" />
<text x="583.6" y="858.7" font-size="11.2" fill="#666463" text-anchor="middle" letter-spacing="0.25">May 2024</text>
<line x1="750.5" y1="723.3" x2="750.5" y2="844" stroke="#d6d6d6" stroke-width="1" stroke-dasharray="1 4" />
<text x="750.8" y="858.7" font-size="11.2" fill="#666463" text-anchor="middle" letter-spacing="0.25">Jul 2024</text>
<line x1="920.5" y1="723.3" x2="920.5" y2="844" stroke="#d6d6d6" stroke-width="1" stroke-dasharray="1 4" />
<text x="920.7" y="858.7" font-size="11.2" fill="#666463" text-anchor="middle" letter-spacing="0.25">Sep 2024</text>
<text x="222.5" y="765.8" font-size="11" fill="#666463" text-anchor="start" letter-spacing="0.2">2K</text>
<text x="222.5" y="848.2" font-size="11" fill="#666463" text-anchor="start" letter-spacing="0.2">0K</text>
<path d="M253.7 836.3 L258.9 841.5 L262.6 840.5 L267.0 841.5 L305.0 841.5 L309.8 840.8 L314.0 841.5 L328.7 841.5 L333.7 830.2 L337.6 841.5 L375.0 841.5 L379.6 840.6 L384.0 841.5 L409.9 841.5 L413.2 829.2 L417.0 836.8 L425.5 841.0 L431.0 841.5 L435.4 838.7 L440.0 841.5 L446.2 839.2 L450.0 841.5 L455.7 841.5 L462.5 833.0 L465.6 841.5 L481.0 841.5 L484.9 839.6 L486.8 841.5 L498.4 822.6 L504.7 831.6 L507.0 839.2 L509.4 839.4 L512.0 841.5 L522.0 841.5 L526.4 840.6 L530.0 841.5 L542.0 841.5 L544.8 834.4 L550.0 841.5 L576.9 841.5 L580.3 753.9 L584.8 841.5 L588.7 833.0 L598.0 841.5 L612.0 841.5 L619.2 839.0 L626.0 841.5 L635.5 841.5 L637.9 834.8 L645.7 841.5 L659.0 841.5 L665.4 810.7 L674.7 841.5 L690.4 841.5 L692.6 834.8 L695.3 841.5 L698.9 839.6 L701.0 840.0 L712.0 831.8 L715.2 841.5 L720.0 839.6 L724.0 841.5 L730.0 841.5 L734.0 840.4 L738.0 841.5 L744.2 841.5 L747.4 816.7 L755.6 841.5 L777.0 841.5 L780.3 835.8 L785.0 841.5 L788.0 839.7 L792.0 841.5 L804.0 841.5 L808.0 840.3 L812.0 841.5 L826.0 841.5 L829.8 833.5 L832.5 809.9 L836.9 841.5 L842.0 843.0 L850.0 839.5 L857.0 840.0 L862.0 841.5 L865.2 833.0 L868.0 841.5 L873.7 835.4 L877.0 841.5 L905.0 841.5 L909.4 838.2 L911.8 841.5 L917.5 818.4 L925.5 841.5 L932.0 841.5 L942.2 830.5 L946.0 841.0 L950.5 826.4 L955.0 841.5 L960.0 841.5 L963.0 840.5 L968.0 842.0 L982.0 841.5 L986.3 836.8 L992.5 838.5 L999.5 809.9 L1005.7 841.5 L1020.0 841.5 L1024.3 834.0 L1028.0 841.5 L1033.0 842.0" fill="none" stroke="#02545f" stroke-width="2.7" stroke-linejoin="round" stroke-linecap="round"/>
<path d="M253.7 843.5 L289.5 840.5 L295.0 844.4 L405.0 844.4 L413.2 837.5 L418.0 844.4 L455.0 844.4 L462.5 836.5 L468.0 844.4 L486.8 844.4 L498.4 832.5 L507.0 844.4 L540.0 844.4 L544.8 838.0 L550.0 844.4 L576.7 844.4 L580.3 780.5 L584.5 844.4 L588.7 838.0 L594.0 844.4 L660.0 844.4 L665.4 834.8 L671.0 844.4 L708.0 844.4 L712.0 838.0 L716.0 844.4 L743.0 844.4 L747.4 836.6 L752.0 844.4 L827.0 844.4 L832.3 835.2 L837.0 844.4 L912.0 844.4 L917.3 833.3 L923.0 844.4 L936.0 844.4 L945.0 836.5 L951.0 838.0 L956.0 844.4 L994.0 844.4 L999.7 834.4 L1005.0 844.4 L1020.0 844.4 L1024.3 836.0 L1028.0 844.4 L1039.5 844.4" fill="none" stroke="#cde5e8" stroke-width="3.4" stroke-linejoin="round" stroke-linecap="round"/>
<line x1="253.8" y1="841.4" x2="1033" y2="841.4" stroke="#1a1a1a" stroke-width="2.3" stroke-dasharray="4.8 5.2"/>
</svg>
<!--C1-->
</div></div>
<!-- tabs -->
<div id="tabs" class="a"></div>
<div class="tab" style="left:42.6px;width:75.0px">Customer</div>
<div class="tab" style="left:117.6px;width:62.7px">Vendor</div>
<div class="tab" style="left:180.3px;width:63.1px">Ledger</div>
<div class="tab" style="left:243.4px;width:61.9px">Project</div>
<div class="tab" style="left:305.3px;width:73.2px">Inventory</div>
<div class="tab" style="left:378.5px;width:78.9px">Production</div>
<div class="tab" style="left:457.4px;width:81.0px">Warehouse</div>
<div class="tab" style="left:538.4px;width:73.1px">Summary</div>
<div class="tab" style="left:611.5px;width:73.0px">DMF jobs</div>
<div class="tab" style="left:684.5px;width:97.1px">DMF Execution</div>
<div class="tab" style="left:781.6px;width:113.0px">DMF Exported jobs</div>
<div class="tab" style="left:894.6px;width:115.6px">DMF Imported jobs</div>
<div class="tab" style="left:1010.2px;width:108.2px">Batch job analysis</div>
<div class="a" style="left:1118.4px;top:882px;width:1px;height:28px;background:#bdbdbd"></div><div id="btm" class="a"></div>
<div class="a" style="left:42.6px;top:907px;width:75px;height:3px;background:#117865"></div><div class="a" style="left:42px;top:882px;width:1px;height:28px;background:#8a8a8a"></div>
<svg class="a" style="left:11px;top:881px" width="32" height="28" viewBox="11 881 32 28"><g fill="none" stroke="#c8c6c4" stroke-width="1"><path d="M19.8 892 L16.3 895.4 L19.8 898.8 Z"/><path d="M33.3 892 L36.8 895.4 L33.3 898.8 Z"/></g></svg>
</body></html>
